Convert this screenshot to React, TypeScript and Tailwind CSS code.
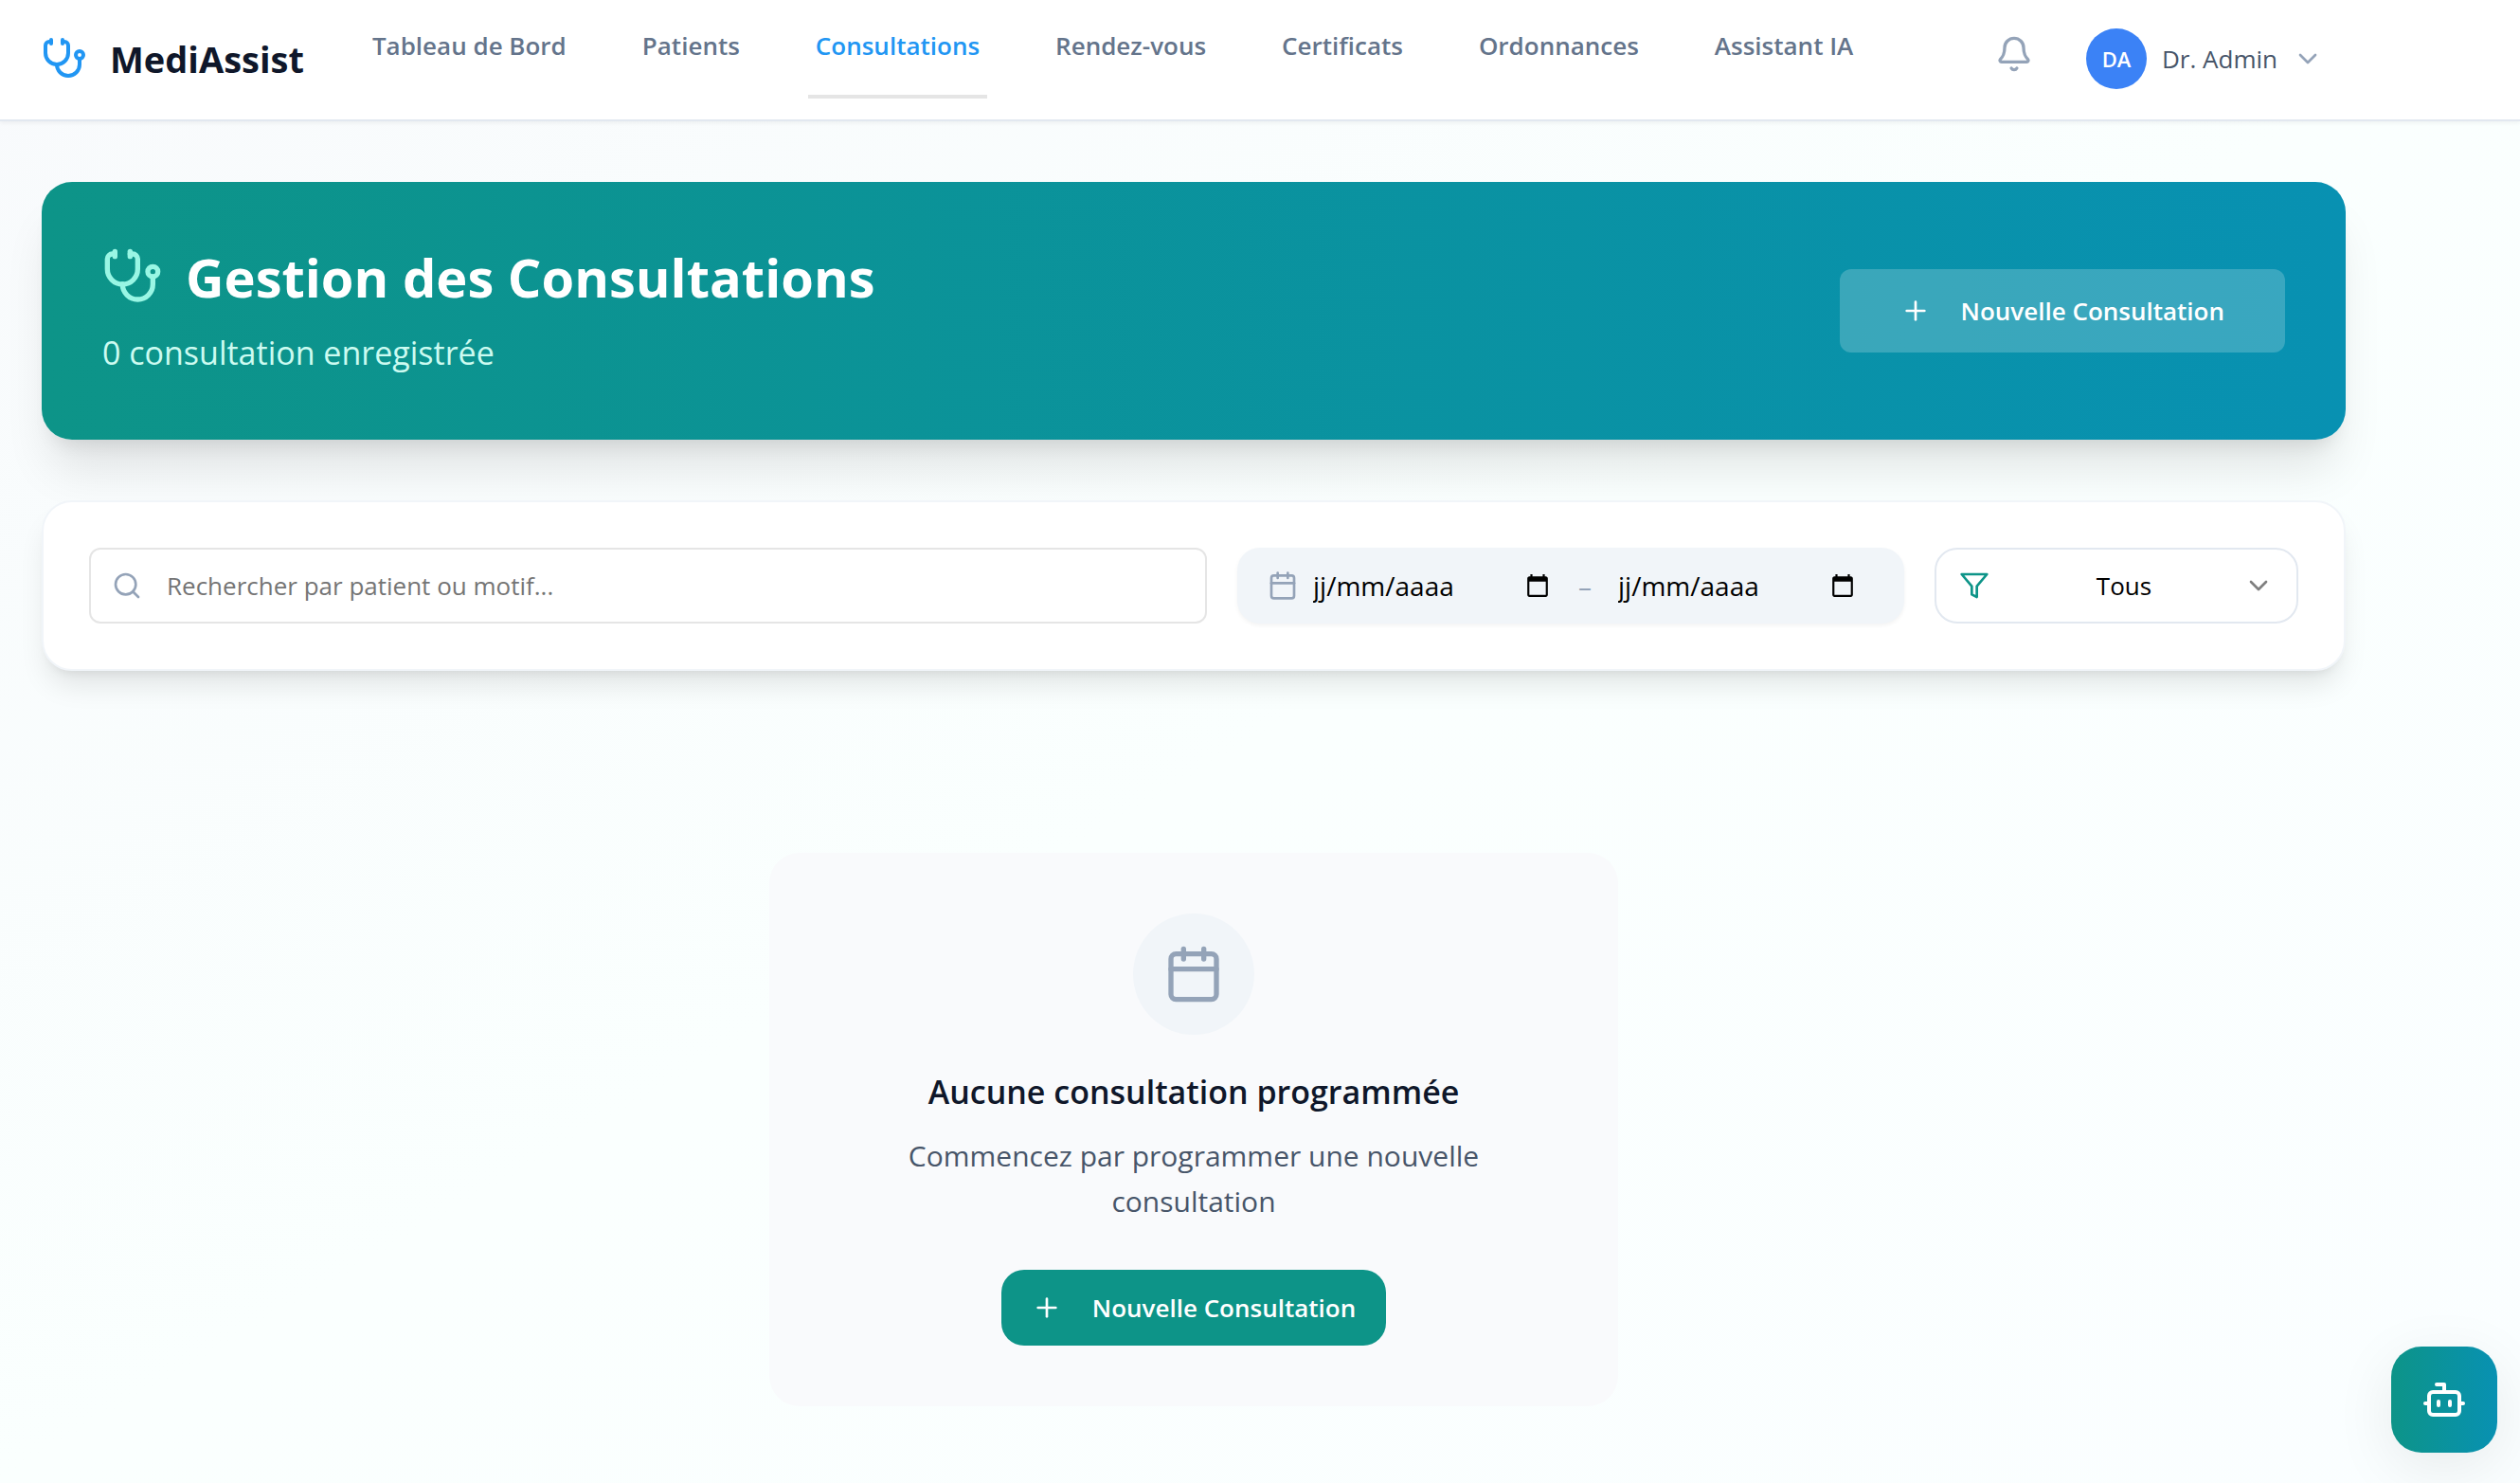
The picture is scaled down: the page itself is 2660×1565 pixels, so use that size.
import { Bell, Bot, Calendar, ChevronDown, Plus, Search, Stethoscope } from "lucide-react";

const navItems = [
  { label: "Tableau de Bord" },
  { label: "Patients" },
  { label: "Consultations", active: true },
  { label: "Rendez-vous" },
  { label: "Certificats" },
  { label: "Ordonnances" },
  { label: "Assistant IA" },
];

function FilterIcon({ className }: { className?: string }) {
  return (
    <svg
      viewBox="0 0 24 24"
      fill="none"
      stroke="currentColor"
      strokeWidth="2"
      strokeLinecap="round"
      strokeLinejoin="round"
      className={className}
      aria-hidden
    >
      <polygon points="22 3 2 3 10 12.46 10 19 14 21 14 12.46 22 3" />
    </svg>
  );
}

function DateField({ label }: { label: string }) {
  return (
    <div className="flex w-[268px] items-center pl-2">
      <input
        type="text"
        aria-label={label}
        placeholder="jj/mm/aaaa"
        className="min-w-0 flex-1 bg-transparent text-[28px] leading-10 text-black outline-none placeholder:text-black"
      />
      <button type="button" aria-label={`Choisir : ${label}`} className="mr-2.5">
        <svg viewBox="0 0 24 24" fill="currentColor" className="size-[26px] text-black" aria-hidden>
          <path d="M20 3h-1V1h-2v2H7V1H5v2H4c-1.1 0-2 .9-2 2v16c0 1.1.9 2 2 2h16c1.1 0 2-.9 2-2V5c0-1.1-.9-2-2-2zm0 18H4V8h16v13z" />
        </svg>
      </button>
    </div>
  );
}

function Header() {
  return (
    <header className="h-32 border-b-2 border-[#e2e8f0] bg-white pb-0.5 shadow-[0_2px_4px_rgba(0,0,0,0.05)]">
      <div className="flex h-full max-w-[2520px] items-center px-11">
        <a href="#" className="flex items-center gap-6">
          <Stethoscope className="size-12 text-[#2196f3]" />
          <span className="text-[38px] leading-14 font-bold text-[#0f172a]">MediAssist</span>
        </a>

        <nav className="ml-16 flex gap-16 self-start pt-7">
          {navItems.map((item) => (
            <a
              key={item.label}
              href="#"
              className={
                item.active
                  ? "h-19 border-b-4 border-[#e5e5e5] px-2 text-[26px] leading-10 font-semibold whitespace-nowrap text-[#2196f3]"
                  : "h-19 px-2 text-[26px] leading-10 font-semibold whitespace-nowrap text-[#64748b]"
              }
            >
              {item.label}
            </a>
          ))}
        </nav>

        <div className="ml-auto flex items-center gap-14 pr-6">
          <button type="button" aria-label="Notifications" className="pb-2.5 text-[#94a3b8]">
            <Bell className="size-10" />
          </button>
          <button type="button" className="flex items-center gap-4">
            <span className="flex size-16 items-center justify-center rounded-full bg-[#3b82f6] text-[22px] font-semibold text-white">
              DA
            </span>
            <span className="text-[26px] leading-10 whitespace-nowrap text-[#475569]">Dr. Admin</span>
            <ChevronDown className="size-8 text-[#94a3b8]" />
          </button>
        </div>
      </div>
    </header>
  );
}

function Banner() {
  return (
    <section className="flex items-center justify-between rounded-[32px] bg-linear-to-r/srgb from-[#0d9488] to-[#0891b2] p-16 shadow-[0_40px_50px_-10px_rgba(0,0,0,0.1),0_16px_20px_-12px_rgba(0,0,0,0.1)]">
      <div>
        <h1 className="flex items-center gap-6 text-[56px] leading-[72px] font-bold text-white">
          <Stethoscope className="size-16 text-[#99f6e4]" />
          Gestion des Consultations
        </h1>
        <p className="mt-4 text-[34px] leading-14 text-[#ccfbf1]">0 consultation enregistrée</p>
      </div>
      <button
        type="button"
        className="flex h-22 items-center gap-8 rounded-xl bg-white/20 px-16 text-[26px] font-semibold text-white"
      >
        <Plus className="size-8" />
        Nouvelle Consultation
      </button>
    </section>
  );
}

function Filters() {
  return (
    <section className="mt-16 flex gap-8 rounded-[32px] border-2 border-[#f1f5f9] bg-white p-12 shadow-[0_20px_30px_-6px_rgba(0,0,0,0.1),0_8px_12px_-8px_rgba(0,0,0,0.1)]">
      {/* Recherche */}
      <label className="flex h-20 flex-1 items-center gap-6.5 rounded-xl border-2 border-[#e5e5e5] px-5.5">
        <Search className="size-8 shrink-0 text-[#94a3b8]" />
        <input
          type="search"
          aria-label="Rechercher"
          placeholder="Rechercher par patient ou motif..."
          className="min-w-0 flex-1 bg-transparent text-[26px] leading-10 outline-none placeholder:text-[#757575]"
        />
      </label>

      {/* Plage de dates */}
      <div className="flex h-20 w-[704px] items-center rounded-3xl bg-[#f1f5f9] px-8 shadow-[0_2px_4px_rgba(0,0,0,0.05)]">
        <Calendar className="mr-2 size-8 shrink-0 text-[#94a3b8]" />
        <DateField label="Date de début" />
        <span className="mx-5 text-[28px] leading-10 text-[#94a3b8]">–</span>
        <DateField label="Date de fin" />
      </div>

      {/* Statut */}
      <label className="flex h-20 w-96 items-center rounded-3xl border-2 border-[#e2e8f0] px-6">
        <FilterIcon className="mr-4 size-8 shrink-0 text-[#0d9488]" />
        <select
          aria-label="Statut"
          className="min-w-0 flex-1 appearance-none bg-transparent text-center text-[26px] leading-10 text-black outline-none [text-align-last:center]"
        >
          <option>Tous</option>
        </select>
        <ChevronDown className="size-8 shrink-0 text-black/50" />
      </label>
    </section>
  );
}

function EmptyState() {
  return (
    <section className="mx-auto my-48 flex w-full max-w-4xl flex-col items-center rounded-[32px] bg-[#f9fafc] p-16 text-center">
      <div className="flex size-32 items-center justify-center rounded-full bg-[#f1f5f9]">
        <Calendar className="size-16 text-[#94a3b8]" />
      </div>
      <h2 className="mt-8 text-[34px] leading-14 font-semibold text-[#0f172a]">
        Aucune consultation programmée
      </h2>
      <p className="mt-4 max-w-2xl text-[30px] leading-12 text-[#475569]">
        Commencez par programmer une nouvelle consultation
      </p>
      <button
        type="button"
        className="mt-12 flex h-20 items-center gap-8 rounded-3xl bg-[#0d9488] px-8 text-[26px] font-semibold text-white"
      >
        <Plus className="size-8" />
        Nouvelle Consultation
      </button>
    </section>
  );
}

export default function App() {
  return (
    <div className="h-screen overflow-hidden bg-linear-to-br/srgb from-[#f8fafc] via-[#fafffe] to-[#fafeff] font-['Open_Sans',sans-serif] antialiased">
      <Header />
      <main className="max-w-[2520px] px-11 pt-16">
        <Banner />
        <Filters />
        <EmptyState />
      </main>

      <button
        type="button"
        aria-label="Assistant IA"
        className="fixed right-6 bottom-8 flex size-28 items-center justify-center rounded-[32px] bg-linear-to-r/srgb from-[#0d9488] to-[#0891b2] text-white shadow-[0_16px_64px_rgba(0,0,0,0.08)]"
      >
        <Bot className="size-12" />
      </button>
    </div>
  );
}
